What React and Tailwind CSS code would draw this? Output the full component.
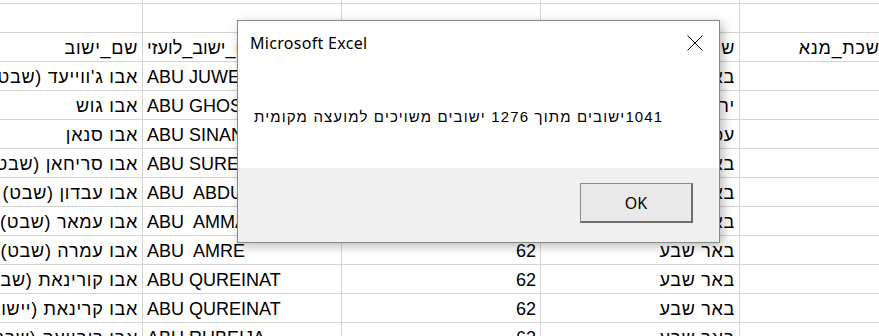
import React from 'react';

const ROWS = [
  ["אבו ג'ווייעד (שבט)", "ABU JUWEI'ID", '62', 'באר שבע'],
  ['אבו גוש', 'ABU GHOSH', '9', 'ירושלים'],
  ['אבו סנאן', 'ABU SINAN', '24', 'עכו'],
  ['אבו סריחאן (שבט)', 'ABU SUREIHAN', '62', 'באר שבע'],
  ['אבו עבדון (שבט)', 'ABU  ABDUN', '62', 'באר שבע'],
  ['אבו עמאר (שבט)', 'ABU  AMMAR', '62', 'באר שבע'],
  ['אבו עמרה (שבט)', 'ABU  AMRE', '62', 'באר שבע'],
  ['אבו קורינאת (שבט)', 'ABU QUREINAT', '62', 'באר שבע'],
  ['אבו קרינאת (יישוב)', 'ABU QUREINAT', '62', 'באר שבע'],
  ['אבו רובייעה (שבט)', 'ABU RUBEIJA', '62', 'באר שבע'],
];

const cell = 'h-full border-r border-[#d4d4d4] flex items-end pb-[3px] whitespace-pre';

// hebrew text sits right-aligned, like excel's general alignment
const Heb = ({ children }) => <span dir="rtl" className="tracking-[0.7px]">{children}</span>;

function Row({ values, tall = true }) {
  const [name, latin, num, district, extra] = values || [];
  return (
    <div className={`flex border-b border-[#d4d4d4] ${tall ? 'h-[29px]' : 'h-[4px]'}`}>
      <div className={`${cell} w-[200px] justify-end pr-[4px]`}><Heb>{name}</Heb></div>
      <div className={`${cell} w-[199px] pl-[4px]`}>{latin}</div>
      <div className={`${cell} w-[199px] justify-end pr-[4px]`}>{num}</div>
      <div className={`${cell} w-[199px] justify-end pr-[4px]`}><Heb>{district}</Heb></div>
      <div className={`${cell} w-[199px] justify-end pr-[11px]`}><Heb>{extra}</Heb></div>
    </div>
  );
}

function MessageBox() {
  return (
    <div className="absolute left-[237px] top-[20px] w-[483px] h-[223px] border border-[#888888] bg-white flex flex-col shadow-[3px_3px_10px_rgba(0,0,0,0.28)]">
      <div className="h-[147px] bg-white">
        <div className="flex items-start justify-between pt-[12px] pl-[12px] pr-[16px]">
          <span className="text-[16px] tracking-[0.3px] leading-[20px] text-black font-['Noto_Sans',sans-serif]">
            Microsoft Excel
          </span>
          <svg width="16" height="16" viewBox="0 0 16 16" className="mt-[2px]">
            <path d="M0.5 0.5 L15.5 15.5 M15.5 0.5 L0.5 15.5" stroke="#000" strokeWidth="1" fill="none" />
          </svg>
        </div>
        <div className="mt-[54px] flex pl-[16px]">
          <p dir="rtl" className="text-[15px] tracking-[1.15px] leading-[20px] text-black font-['Liberation_Sans','DejaVu_Sans',sans-serif]">
            1041ישובים מתוך 1276 ישובים משויכים למועצה מקומית
          </p>
        </div>
      </div>
      <div className="flex-1 bg-[#f0f0f0] flex justify-end items-start pt-[15px] pr-[26px]">
        <button className="w-[113px] h-[40px] bg-[#e9e9e9] border border-[#8a8a8a] border-r-2 border-b-2 border-r-[#6e6e6e] border-b-[#6e6e6e] text-[16px] text-black font-['Noto_Sans',sans-serif] flex items-center justify-center">
          OK
        </button>
      </div>
    </div>
  );
}

export default function App() {
  return (
    <div className="relative w-[879px] h-[336px] overflow-hidden bg-white text-black text-[18px] leading-[20px] font-['Liberation_Sans','DejaVu_Sans',sans-serif]">
      <div className="ml-[-57px] w-[1000px]">
        <Row tall={false} />
        <Row />
        <Row values={['שם_ישוב', 'שם_ישוב_לועזי', 'סמל_נפה', 'שם_נפה', 'שם_לשכת_מנא']} />
        {ROWS.map((r, i) => (
          <Row key={i} values={r} />
        ))}
      </div>
      <MessageBox />
    </div>
  );
}
